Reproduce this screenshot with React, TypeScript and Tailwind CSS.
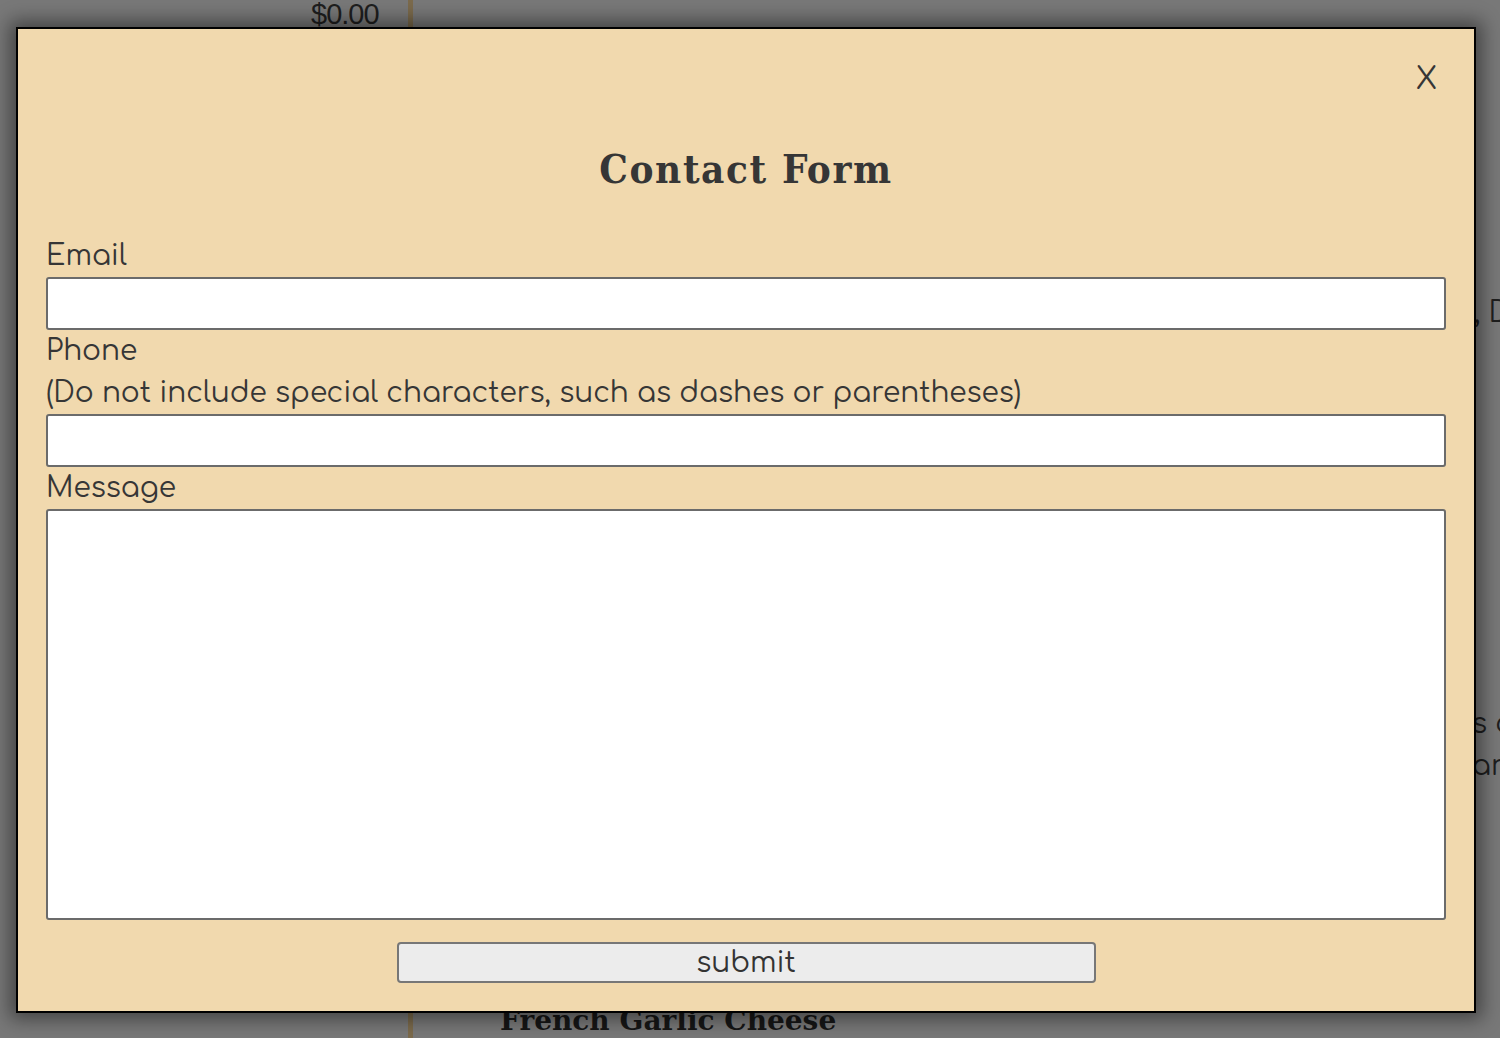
import React from "react";

const body = "font-['Comfortaa','Lato','Noto_Sans',sans-serif]";

export default function App() {
  return (
    <div className="relative w-[1500px] h-[1038px] overflow-hidden bg-[#787878]">
      {/* page behind the overlay */}
      <div className="absolute left-[408px] top-0 w-[5px] h-full bg-[#7b6a4c]" />
      <div className="absolute left-[311px] top-[-7px] text-[29px] text-[#1e1e1e] font-['Liberation_Sans',sans-serif] tracking-[-1px]">
        $0.00
      </div>
      <div className={`absolute left-[1474px] top-[292px] text-[28px] leading-[42px] text-[#1e1e1e] whitespace-nowrap ${body}`}>
        , D
      </div>
      <div className={`absolute left-[1472px] top-[703px] text-[28px] leading-[42px] text-[#1e1e1e] whitespace-nowrap ${body}`}>
        <div>s c</div>
        <div>ar</div>
      </div>
      <div className="absolute left-[500px] top-[1000px] text-[28px] font-bold text-[#161616] font-['DejaVu_Serif',serif] whitespace-nowrap">
        French Garlic Cheese
      </div>

      {/* modal */}
      <div
        className={`absolute left-[16px] top-[27px] w-[1460px] h-[986px] bg-[#f1d9ae] border-2 border-black shadow-[0_0_18px_6px_rgba(0,0,0,0.45)] px-[28px] pb-[28px] text-[#363636] ${body}`}
      >
        <div className="flex justify-end">
          <button className={`mt-[36px] mr-[9px] text-[30px] leading-none text-[#363636] ${body}`}>
            X
          </button>
        </div>
        <h2 className="mt-[50px] mb-[42px] text-center text-[40px] leading-[48px] font-bold tracking-[1.6px] font-['DejaVu_Serif_Condensed','DejaVu_Serif',serif] text-[#363636]">
          Contact Form
        </h2>

        <form className="flex flex-col">
          <label className="text-[28px] leading-[42px]">Email</label>
          <input className="h-[53px] w-full bg-white border-2 border-[#6b6b6b] rounded-[3px]" />
          <label className="text-[28px] leading-[42px]">
            Phone
            <br />
            (Do not include special characters, such as dashes or parentheses)
          </label>
          <input className="h-[53px] w-full bg-white border-2 border-[#6b6b6b] rounded-[3px]" />
          <label className="text-[28px] leading-[42px]">Message</label>
          <textarea className="h-[411px] w-full bg-white border-2 border-[#6b6b6b] rounded-[3px] resize-none" />
          <div className="flex justify-center mt-[22px]">
            <button
              type="button"
              className={`w-[699px] h-[41px] bg-[#ececec] border-2 border-[#777] rounded-[4px] text-[28px] leading-none text-[#333] ${body}`}
            >
              submit
            </button>
          </div>
        </form>
      </div>
    </div>
  );
}
